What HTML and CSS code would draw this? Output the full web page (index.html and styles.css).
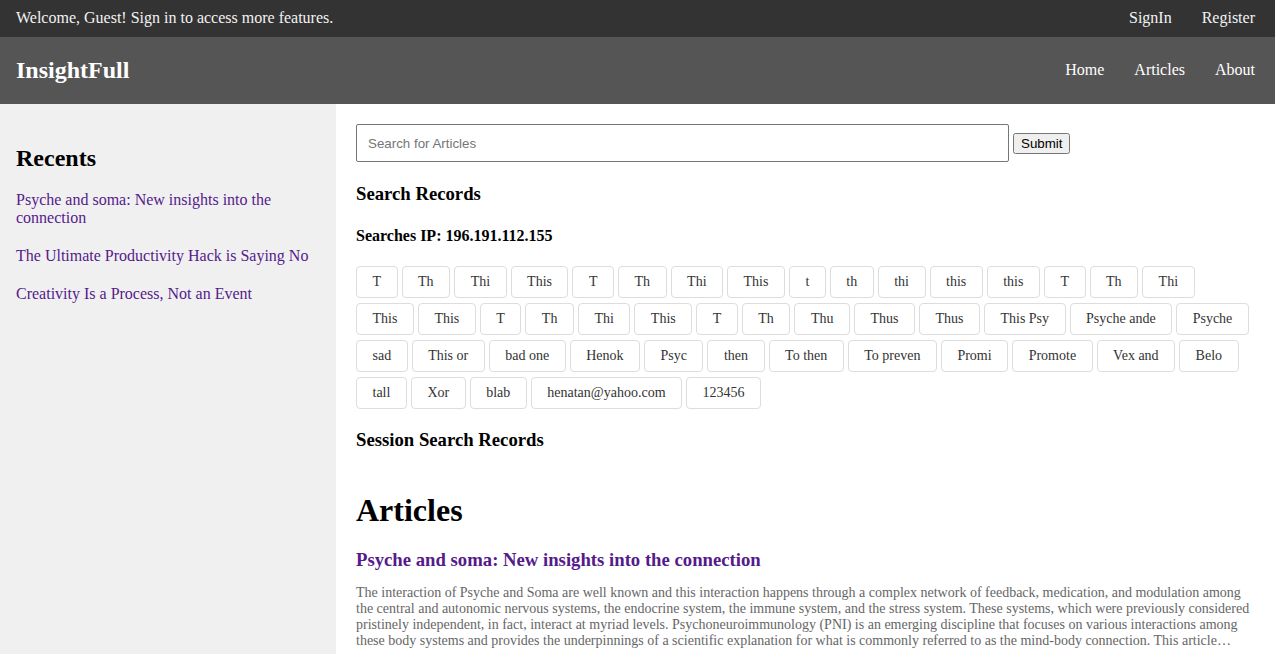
FILE: index.html
```html
<!DOCTYPE html>
<html lang="en">
<head>
<meta charset="utf-8">
<title>InsightFull</title>
<link rel="stylesheet" href="styles.css">
</head>
<body>
<div class="topbar">
  <span class="welcome">Welcome, Guest! Sign in to access more features.</span>
  <nav class="auth">
    <a href="#">SignIn</a>
    <a href="#">Register</a>
  </nav>
</div>
<header class="header">
  <a class="logo" href="#">InsightFull</a>
  <nav class="mainnav">
    <a href="#">Home</a>
    <a href="#">Articles</a>
    <a href="#">About</a>
  </nav>
</header>
<div class="layout">
  <aside class="sidebar">
    <h2 class="side-title">Recents</h2>
    <p class="recent"><a href="#">Psyche and soma: New insights into the connection</a></p>
    <p class="recent"><a href="#">The Ultimate Productivity Hack is Saying No</a></p>
    <p class="recent"><a href="#">Creativity Is a Process, Not an Event</a></p>
  </aside>
  <main class="content">
    <form class="search">
      <input class="search-input" type="text" placeholder="Search for Articles">
      <button class="search-btn" type="submit">Submit</button>
    </form>
    <h3 class="sec-title">Search Records</h3>
    <h4 class="ip">Searches IP: 196.191.112.155</h4>
    <div class="tags">
      <span class="tag">T</span><span class="tag">Th</span><span class="tag">Thi</span><span class="tag">This</span><span class="tag">T</span><span class="tag">Th</span><span class="tag">Thi</span><span class="tag">This</span><span class="tag">t</span><span class="tag">th</span><span class="tag">thi</span><span class="tag">this</span><span class="tag">this</span><span class="tag">T</span><span class="tag">Th</span><span class="tag">Thi</span>
      <span class="tag">This</span><span class="tag">This</span><span class="tag">T</span><span class="tag">Th</span><span class="tag">Thi</span><span class="tag">This</span><span class="tag">T</span><span class="tag">Th</span><span class="tag">Thu</span><span class="tag">Thus</span><span class="tag">Thus</span><span class="tag">This Psy</span><span class="tag">Psyche ande</span><span class="tag">Psyche</span>
      <span class="tag">sad</span><span class="tag">This or</span><span class="tag">bad one</span><span class="tag">Henok</span><span class="tag">Psyc</span><span class="tag">then</span><span class="tag">To then</span><span class="tag">To preven</span><span class="tag">Promi</span><span class="tag">Promote</span><span class="tag">Vex and</span><span class="tag">Belo</span>
      <span class="tag">tall</span><span class="tag">Xor</span><span class="tag">blab</span><span class="tag">henatan@yahoo.com</span><span class="tag">123456</span>
    </div>
    <h3 class="sec-title session">Session Search Records</h3>
    <section class="articles">
      <h1 class="articles-title">Articles</h1>
      <article class="article">
        <h3 class="article-title"><a href="#">Psyche and soma: New insights into the connection</a></h3>
        <p class="article-text">The interaction of Psyche and Soma are well known and this interaction happens through a complex network of feedback, medication, and modulation among the central and autonomic nervous systems, the endocrine system, the immune system, and the stress system. These systems, which were previously considered pristinely independent, in fact, interact at myriad levels. Psychoneuroimmunology (PNI) is an emerging discipline that focuses on various interactions among these body systems and provides the underpinnings of a scientific explanation for what is commonly referred to as the mind-body connection. This article…</p>
      </article>
    </section>
  </main>
</div>
</body>
</html>
```
FILE: styles.css
```css
html, body {
  margin: 0;
  padding: 0;
}
body {
  font-family: "Liberation Serif", "Times New Roman", serif;
  font-size: 16px;
  color: #000;
  background: #fff;
}
a {
  text-decoration: none;
}
.topbar {
  display: flex;
  justify-content: space-between;
  align-items: center;
  height: 37px;
  padding: 0 20px 1px 16px;
  box-sizing: border-box;
  background: #333;
  color: #f2f2f2;
}
.auth {
  display: flex;
  gap: 30px;
}
.auth a {
  color: #f2f2f2;
}
.header {
  display: flex;
  justify-content: space-between;
  align-items: center;
  height: 67px;
  padding: 0 20px 0 16px;
  background: #555;
}
.logo {
  color: #fff;
  font-size: 24px;
  font-weight: bold;
}
.mainnav {
  display: flex;
  gap: 30px;
  padding-bottom: 2px;
}
.mainnav a {
  color: #fff;
}
.layout {
  display: flex;
  min-height: 550px;
}
.sidebar {
  width: 336px;
  flex: none;
  box-sizing: border-box;
  padding: 20px 20px 20px 16px;
  background: #f0f0f0;
}
.side-title {
  font-size: 24px;
  margin: 21px 0 19px;
}
.recent {
  margin: 0 0 20px;
}
.recent a {
  color: #551a8b;
}
.content {
  flex: 1;
  min-width: 0;
  padding: 20px;
}
.search {
  display: flex;
  align-items: center;
  gap: 4px;
}
.search-input {
  width: 653px;
  height: 38px;
  box-sizing: border-box;
  padding: 0 11px;
  border: 1px solid #767676;
  border-radius: 2px;
  font-family: "Liberation Sans", Arial, sans-serif;
  font-size: 13.33px;
}
.search-input::placeholder {
  color: #757575;
}
.search-btn {
  font-family: "Liberation Sans", Arial, sans-serif;
  font-size: 13.33px;
}
.sec-title {
  font-size: 18.72px;
  margin: 21px 0 19px;
}
.session {
  margin-top: 20px;
}
.ip {
  font-size: 16px;
  margin: 22px 0 21px;
}
.tags {
  display: flex;
  flex-wrap: wrap;
  gap: 5px 4px;
}
.tag {
  display: inline-block;
  box-sizing: border-box;
  height: 32px;
  padding: 0 15.5px;
  line-height: 30px;
  border: 1px solid #ddd;
  border-radius: 4px;
  font-size: 14px;
  color: #333;
  background: #fff;
}
.articles {
  margin-top: 41px;
}
.articles-title {
  font-size: 32px;
  margin: 0 0 20px;
}
.article-title {
  font-size: 18.72px;
  margin: 0 0 14px;
}
.article-title a {
  color: #551a8b;
}
.article-text {
  font-size: 14px;
  color: #666;
  margin: 0 0 20px;
}
```
